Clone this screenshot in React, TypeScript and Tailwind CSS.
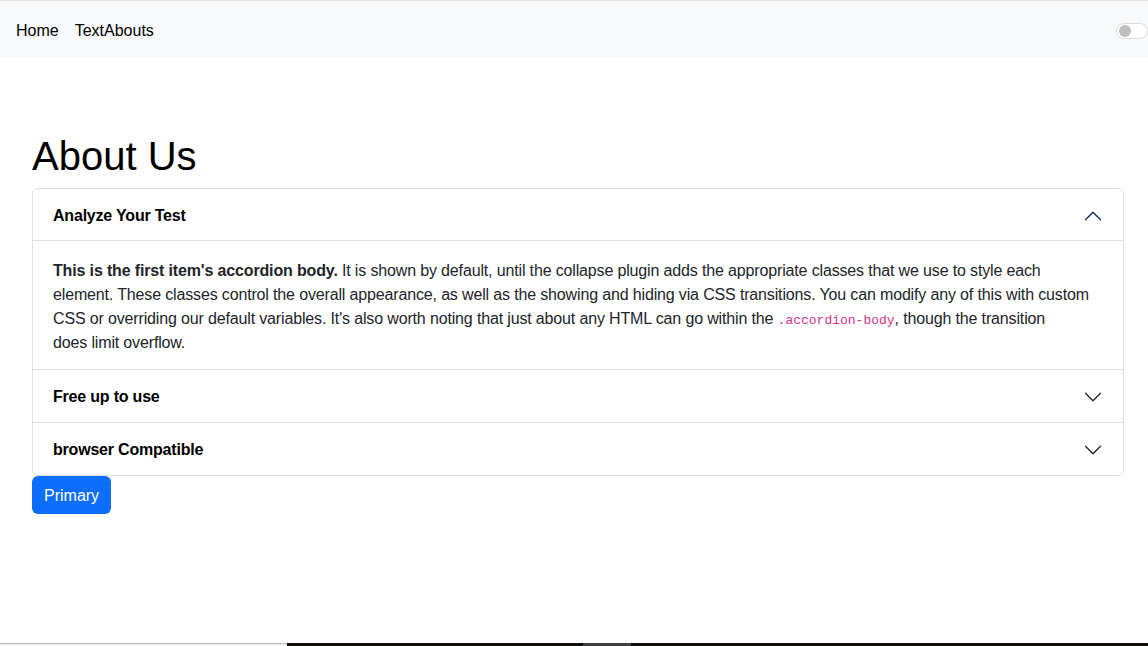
const items = [
  { title: "Analyze Your Test", open: true },
  { title: "Free up to use", open: false },
  { title: "browser Compatible", open: false },
];

function Chevron({ up, color }: { up: boolean; color: string }) {
  return (
    <svg viewBox="0 0 16 16" className={`h-5 w-5 ${up ? "rotate-180" : ""}`} fill="none">
      <path d="M2 5L8 11L14 5" stroke={color} strokeLinecap="round" strokeLinejoin="round" strokeWidth="1" />
    </svg>
  );
}

function AccordionBody() {
  return (
    <div className="border-t border-[#dee2e6] px-5 pb-[14px] pt-[18px] text-base leading-6 tracking-[-0.15px] text-[#212529]">
      <span className="block whitespace-nowrap">
        <strong className="font-bold">This is the first item's accordion body.</strong> It is shown by default,
        until the collapse plugin adds the appropriate classes that we use to style each
      </span>
      <span className="block whitespace-nowrap">
        element. These classes control the overall appearance, as well as the showing and hiding via CSS
        transitions. You can modify any of this with custom
      </span>
      <span className="block whitespace-nowrap">
        CSS or overriding our default variables. It's also worth noting that just about any HTML can go within
        the{" "}
        <code className="font-['Liberation_Mono',monospace] text-[13px] leading-none tracking-normal text-[#d63384]">
          .accordion-body
        </code>
        , though the transition
      </span>
      <span className="block whitespace-nowrap">does limit overflow.</span>
    </div>
  );
}

export default function App() {
  return (
    <div className="flex h-[646px] flex-col bg-white font-['Liberation_Sans',Arial,sans-serif] text-[#212529]">
      <nav className="flex h-[57px] items-center border-t border-[#e5e5e5] bg-[#f8f9fa] pl-4 pt-1">
        <a className="text-base text-black">Home</a>
        <a className="ml-4 text-base text-black">TextAbouts</a>
        <div className="ml-auto flex h-4 w-8 items-center rounded-full border border-[#dcdcdc] bg-white pl-[2px]">
          <span className="h-3 w-3 rounded-full bg-[#bfbfbf]" />
        </div>
      </nav>

      <main className="ml-8 mt-[75px] w-[1092px]">
        <h1 className="mb-2 text-[40px] font-medium leading-[48px] text-black">About Us</h1>
        <div className="overflow-hidden rounded-md border border-[#dee2e6]">
          {items.map((it, i) => (
            <div key={it.title} className={i > 0 ? "border-t border-[#dee2e6]" : ""}>
              <div
                className={`flex items-center justify-between px-5 pt-[2px] ${i === 0 ? "h-[51px]" : "h-[52px]"}`}
              >
                <span className="text-base font-bold tracking-[-0.2px] text-black">{it.title}</span>
                <Chevron up={it.open} color={it.open ? "#052c65" : "#212529"} />
              </div>
              {it.open && <AccordionBody />}
            </div>
          ))}
        </div>
        <button className="h-[38px] rounded-md bg-[#0d6efd] px-3 pt-[2px] text-base text-white">Primary</button>
      </main>

      <div className="flex-1" />
      <div className="flex h-[3px]">
        <div className="w-[287px] border-t border-[#bdbdbd] bg-[#f0f0f0]" />
        <div className="w-[296px] bg-[#0f0c08]" />
        <div className="w-[48px] bg-[#3f3f3f]" />
        <div className="flex-1 bg-[#0f0c08]" />
      </div>
    </div>
  );
}
